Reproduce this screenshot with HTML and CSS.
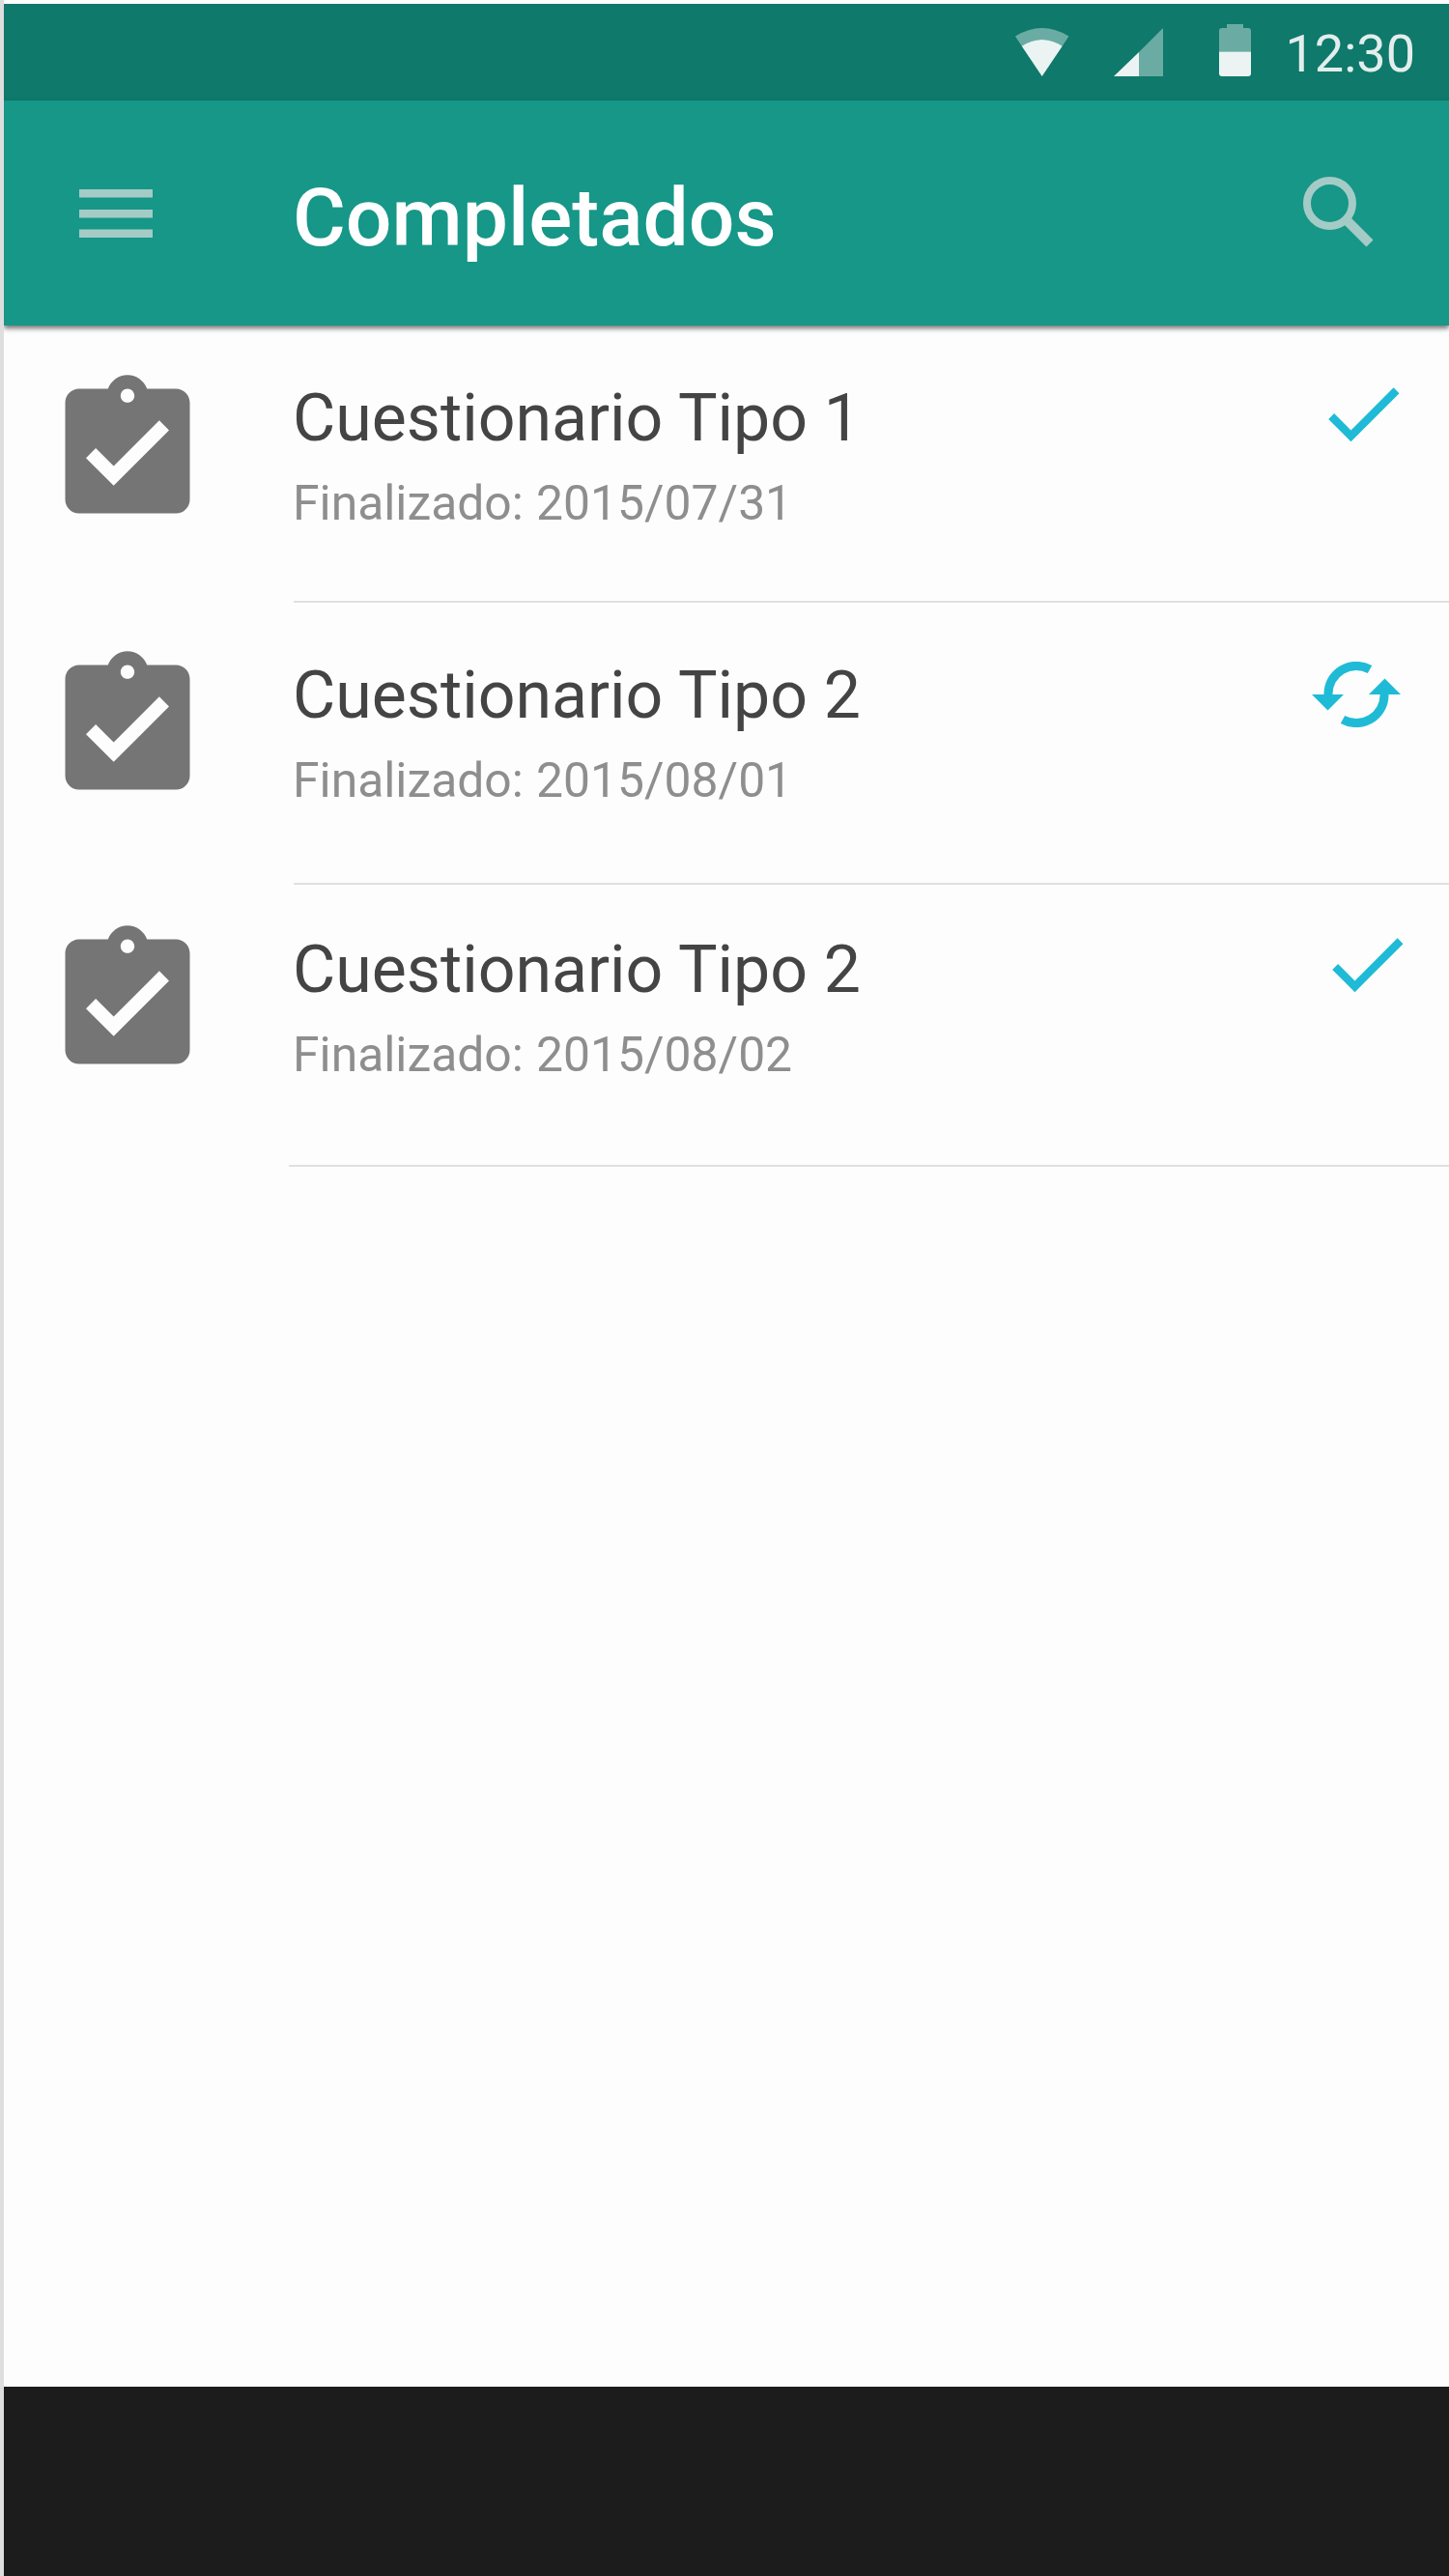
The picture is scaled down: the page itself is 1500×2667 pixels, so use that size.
FILE: index.html
```html
<!DOCTYPE html>
<html lang="es">
<head>
  <meta charset="UTF-8" />
  <title>Completados</title>
  <link rel="stylesheet" href="styles.css">
</head>
<body>
  <div class="status-bar">
    <svg class="st-wifi" width="56" height="50" viewBox="0 0 56 50">
      <path class="dim" d="M0 8.5Q27.7 -8.5 55.4 8.5L48.7 18.7Q27.7 5.3 6.7 18.7z"/>
      <path class="lit" d="M27.7 50L6.7 18.7Q27.7 5.3 48.7 18.7z"/>
    </svg>
    <svg class="st-signal" width="51" height="50" viewBox="0 0 51 50">
      <path class="dim" d="M26 25L51 0V50H26z"/>
      <path class="lit" d="M0 50L26 25V50z"/>
    </svg>
    <svg class="st-battery" width="33" height="54" viewBox="0 0 33 54">
      <path class="dim" d="M8 0H25V4H30Q33 4 33 7V28.500H0V7Q0 4 3 4H8z"/>
      <path class="lit" d="M0 28.500H33V51Q33 54 30 54H3Q0 54 0 51z"/>
    </svg>
    <span class="clock">12:30</span>
  </div>

  <header class="toolbar">
    <svg class="menu-icon" width="76" height="50" viewBox="0 0 76 50">
      <path d="M0 0H76V8.500H0zM0 21H76V29.500H0zM0 41.500H76V50H0z"/>
    </svg>
    <h1 class="toolbar-title">Completados</h1>
    <svg class="search-icon" width="74" height="74" viewBox="0 0 74 74">
      <circle cx="27.500" cy="27.500" r="23.500" />
      <path d="M46 46L69 69" />
    </svg>
  </header>

  <main class="list">
    <section class="item item-first">
      <svg class="item-icon" width="172" height="172" viewBox="0 0 24 24">
        <path d="M19 3h-4.180C14.400 1.840 13.300 1 12 1c-1.300 0-2.400.84-2.820 2H5c-1.100 0-2 .9-2 2v14c0 1.100.9 2 2 2h14c1.100 0 2-.9 2-2V5c0-1.100-.9-2-2-2zm-7 0c.55 0 1 .45 1 1s-.45 1-1 1-1-.45-1-1 .45-1 1-1zm-2 14l-4-4 1.410-1.410L10 14.170l6.590-6.590L18 9l-8 8z"/>
      </svg>
      <div class="item-body">
        <div class="item-text">
          <div class="item-title">Cuestionario Tipo 1</div>
          <div class="item-date">Finalizado: 2015/07/31</div>
        </div>
        <svg class="state-check" width="100" height="100" viewBox="0 0 24 24">
          <path d="M9 16.170L4.830 12l-1.420 1.410L9 19 21 7l-1.410-1.410z"/>
        </svg>
      </div>
    </section>

    <section class="item item-second">
      <svg class="item-icon" width="172" height="172" viewBox="0 0 24 24">
        <path d="M19 3h-4.180C14.400 1.840 13.300 1 12 1c-1.300 0-2.400.84-2.820 2H5c-1.100 0-2 .9-2 2v14c0 1.100.9 2 2 2h14c1.100 0 2-.9 2-2V5c0-1.100-.9-2-2-2zm-7 0c.55 0 1 .45 1 1s-.45 1-1 1-1-.45-1-1 .45-1 1-1zm-2 14l-4-4 1.410-1.410L10 14.170l6.590-6.590L18 9l-8 8z"/>
      </svg>
      <div class="item-body">
        <div class="item-text">
          <div class="item-title">Cuestionario Tipo 2</div>
          <div class="item-date">Finalizado: 2015/08/01</div>
        </div>
        <svg class="state-sync" width="92" height="68" viewBox="0 0 92 68">
          <path class="arc" d="M60 8A29 29 0 0 0 17 34"/>
          <path class="arc" d="M32 60A29 29 0 0 0 75 34"/>
          <path d="M0 34H33L16.500 50.500zM59 34H92L75.500 17.500z"/>
        </svg>
      </div>
    </section>

    <section class="item item-third">
      <svg class="item-icon" width="172" height="172" viewBox="0 0 24 24">
        <path d="M19 3h-4.180C14.400 1.840 13.300 1 12 1c-1.300 0-2.400.84-2.820 2H5c-1.100 0-2 .9-2 2v14c0 1.100.9 2 2 2h14c1.100 0 2-.9 2-2V5c0-1.100-.9-2-2-2zm-7 0c.55 0 1 .45 1 1s-.45 1-1 1-1-.45-1-1 .45-1 1-1zm-2 14l-4-4 1.410-1.410L10 14.170l6.590-6.590L18 9l-8 8z"/>
      </svg>
      <div class="item-body">
        <div class="item-text">
          <div class="item-title">Cuestionario Tipo 2</div>
          <div class="item-date">Finalizado: 2015/08/02</div>
        </div>
        <svg class="state-check" width="100" height="100" viewBox="0 0 24 24">
          <path d="M9 16.170L4.830 12l-1.420 1.410L9 19 21 7l-1.410-1.410z"/>
        </svg>
      </div>
    </section>
  </main>

  <footer class="nav-bar"></footer>
</body>
</html>
```

FILE: styles.css
```css
* {
  box-sizing: border-box;
}

html, body {
  margin: 0;
  height: 100%;
}

body {
  display: flex;
  flex-direction: column;
  min-height: 2667px;
  padding-top: 4px;
  border-left: 4px solid #dedede;
  background-color: #fdfdfd;
  font-family: Roboto, "Liberation Sans", sans-serif;
}

/* status bar */
.status-bar {
  display: flex;
  align-items: flex-start;
  flex: none;
  height: 100px;
  padding-right: 35px;
  background-color: #0f796b;
}

.status-bar svg {
  flex: none;
}

.dim {
  fill: #fff;
  fill-opacity: 0.38;
}

.lit {
  fill: #fff;
  fill-opacity: 0.92;
}

.st-wifi {
  margin: 25px 0 0 1047px;
}

.st-signal {
  margin: 25px 0 0 46px;
}

.st-battery {
  margin: 21px 0 0 58px;
}

.clock {
  margin-left: auto;
  font-size: 54px;
  line-height: 64px;
  margin-top: 20px;
  color: #e3eeec;
}

/* toolbar */
.toolbar {
  position: relative;
  z-index: 1;
  display: flex;
  align-items: flex-start;
  flex: none;
  height: 233px;
  background-color: #169788;
  box-shadow: 0 3px 5px rgba(0, 0, 0, 0.55);
}

.menu-icon {
  flex: none;
  margin: 92px 0 0 78px;
  fill: #a5cbc6;
}

.toolbar-title {
  margin: 73px 0 0 145px;
  font-size: 84px;
  line-height: 98px;
  font-weight: 500;
  color: #fff;
}

.search-icon {
  flex: none;
  margin: 79px 0 0 auto;
  margin-right: 77px;
  fill: none;
  stroke: #a5cbc6;
  stroke-width: 8;
}

.search-icon path {
  stroke-width: 10;
}

/* list rows */
.list {
  flex: 1;
}

.item {
  display: flex;
  align-items: flex-start;
  padding-left: 42px;
}

.item-icon {
  flex: none;
  margin-right: 86px;
  fill: #757575;
}

.item-body {
  display: flex;
  justify-content: space-between;
  align-items: flex-start;
  flex: 1;
  border-bottom: 2px solid #e0e0e0;
}

.item-text {
  margin-left: -1px;
}

.item-title {
  font-size: 68px;
  line-height: 76px;
  color: #444;
}

.item-date {
  margin-top: 21px;
  font-size: 49.800px;
  line-height: 58px;
  word-spacing: 1px;
  color: #8e8e8e;
}

.item-first .item-body {
  height: 287px;
  padding-top: 58px;
}

.item-first .item-icon {
  margin-top: 44px;
}

.item-second .item-body {
  height: 292px;
  padding-top: 58px;
}

.item-second .item-icon {
  margin-top: 43px;
}

.item-third .item-body {
  height: 292px;
  margin-left: -5px;
  padding: 50px 0 0 5px;
}

.item-third .item-icon {
  margin-top: 35px;
}

.state-check {
  flex: none;
  margin-top: -17px;
  margin-right: 39px;
  fill: #1fbbd6;
}

.item-third .state-check {
  margin-top: -18px;
  margin-right: 35px;
}

.state-sync {
  flex: none;
  margin: 3px 50px 0 0;
  fill: #1fbbd6;
}

.state-sync .arc {
  fill: none;
  stroke: #1fbbd6;
  stroke-width: 9;
}

/* system nav bar */
.nav-bar {
  flex: none;
  height: 196px;
  background-color: #1c1c1c;
}
```
